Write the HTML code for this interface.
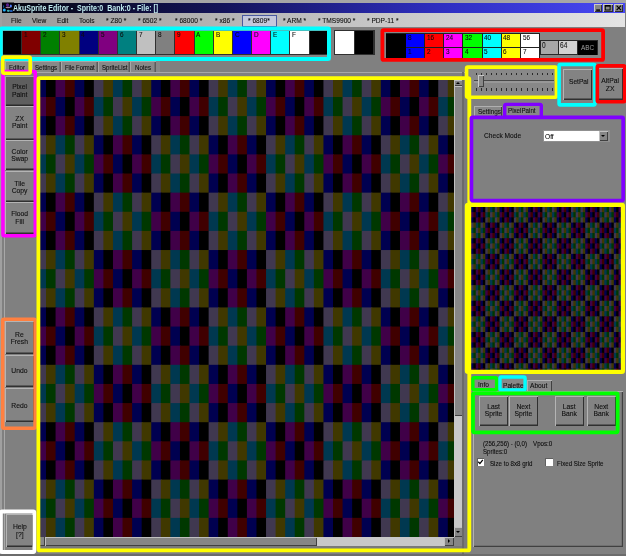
<!DOCTYPE html>
<html><head><meta charset="utf-8"><style>
html,body{margin:0;padding:0;width:626px;height:556px;overflow:hidden;background:#808080}
body>div,body>span,body>svg{position:absolute}
div{box-sizing:border-box}
.t{position:absolute;white-space:nowrap;font-family:"Liberation Sans", sans-serif;line-height:1;transform-origin:0 0;filter:grayscale(1);-webkit-text-stroke:0.1px #000}
.tt{filter:none;-webkit-text-stroke:0}
.ct{position:absolute;text-align:center;font-family:"Liberation Sans", sans-serif;font-size:7.6px;line-height:7.6px;color:#101010;transform:scaleX(0.89);transform-origin:50% 0;filter:grayscale(1);-webkit-text-stroke:0.1px #000}
.ol{position:absolute;box-sizing:content-box}
.arr{position:absolute;width:0;height:0;border-style:solid}
</style></head><body>
<div style="left:0px;top:0px;width:626.00px;height:556.00px;background:#808080"></div><div style="left:0px;top:0px;width:626.00px;height:2.50px;background:#a6a6a6"></div><div style="left:0px;top:0px;width:2.00px;height:556.00px;background:#a0a0a0"></div><div style="left:2px;top:2.5px;width:623.00px;height:10.80px;background:linear-gradient(90deg,#04040c 0%,#141458 35%,#2e2ec0 70%,#4848f4 100%)"></div><svg style="position:absolute;left:0;top:0" width="16" height="16"><defs><filter id="bl" x="-50%" y="-50%" width="200%" height="200%"><feGaussianBlur stdDeviation="0.6"/></filter></defs><rect x="2" y="2.5" width="12" height="10.8" fill="#04040c"/><g filter="url(#bl)"><ellipse cx="7.5" cy="5" rx="1.6" ry="1.8" fill="#5a2090"/><ellipse cx="10.8" cy="6" rx="1.1" ry="1.6" fill="#5080ff"/><ellipse cx="8" cy="7.5" rx="2.6" ry="0.8" fill="#a08098"/><ellipse cx="4.3" cy="10" rx="1.5" ry="1.6" fill="#20b0ff"/><ellipse cx="8.3" cy="10.8" rx="1.5" ry="1.1" fill="#40b0b0"/><ellipse cx="11.2" cy="11" rx="1.6" ry="1.1" fill="#2060c0"/><ellipse cx="3.6" cy="6.5" rx="0.6" ry="1.2" fill="#1050a0"/></g></svg><span class="t tt" style="left:13.4px;top:3.90px;font-size:8.6px;color:#c0ecf0;font-weight:bold;transform:scaleX(0.822);">AkuSprite Editor -&nbsp; Sprite:0&nbsp; Bank:0 - File: []</span><div style="left:593.7px;top:4.2px;width:8.60px;height:7.60px;background:#868686;box-shadow:inset 1px 1px 0 #c8c8c8, inset -1px -1px 0 #303030"></div><div style="left:603px;top:4.2px;width:9.50px;height:7.60px;background:#868686;box-shadow:inset 1px 1px 0 #c8c8c8, inset -1px -1px 0 #303030"></div><div style="left:614px;top:4.2px;width:9.40px;height:7.60px;background:#868686;box-shadow:inset 1px 1px 0 #c8c8c8, inset -1px -1px 0 #303030"></div><svg style="position:absolute;left:586px;top:0" width="40" height="16"><rect x="10.2" y="9.4" width="3.8" height="1.4" fill="#000"/><rect x="19.3" y="5.6" width="4.8" height="4.4" fill="none" stroke="#000" stroke-width="0.9"/><rect x="18.9" y="5.2" width="5.6" height="1.4" fill="#000"/><path d="M30.6 5.6 L35 10.2 M35 5.6 L30.6 10.2" stroke="#000" stroke-width="1.1"/></svg><div style="left:2px;top:13.3px;width:623.00px;height:13.70px;background:linear-gradient(90deg,#9a9a9a 0%,#e4e4e4 100%)"></div><div style="left:242px;top:15.2px;width:35.00px;height:11.80px;background:#c4c8dc;border:1px solid #4a5aa0;box-sizing:border-box"></div><span class="t" style="left:10.9px;top:17.26px;font-size:7.6px;color:#101010;transform:scaleX(0.872);">File</span><span class="t" style="left:32px;top:17.26px;font-size:7.6px;color:#101010;transform:scaleX(0.872);">View</span><span class="t" style="left:56.7px;top:17.26px;font-size:7.6px;color:#101010;transform:scaleX(0.872);">Edit</span><span class="t" style="left:79px;top:17.26px;font-size:7.6px;color:#101010;transform:scaleX(0.872);">Tools</span><span class="t" style="left:105.8px;top:17.26px;font-size:7.6px;color:#101010;transform:scaleX(0.872);">* Z80 *</span><span class="t" style="left:138px;top:17.26px;font-size:7.6px;color:#101010;transform:scaleX(0.872);">* 6502 *</span><span class="t" style="left:174.6px;top:17.26px;font-size:7.6px;color:#101010;transform:scaleX(0.872);">* 68000 *</span><span class="t" style="left:215px;top:17.26px;font-size:7.6px;color:#101010;transform:scaleX(0.872);">* x86 *</span><span class="t" style="left:248px;top:17.26px;font-size:7.6px;color:#101010;transform:scaleX(0.872);">* 6809*</span><span class="t" style="left:282.5px;top:17.26px;font-size:7.6px;color:#101010;transform:scaleX(0.872);">* ARM *</span><span class="t" style="left:318px;top:17.26px;font-size:7.6px;color:#101010;transform:scaleX(0.872);">* TMS9900 *</span><span class="t" style="left:366.8px;top:17.26px;font-size:7.6px;color:#101010;transform:scaleX(0.872);">* PDP-11 *</span><div style="left:0px;top:26.5px;width:331.00px;height:34.50px;background:#868686"></div><div style="left:2.5px;top:30.5px;width:324.50px;height:24.50px;background:#303030"></div><div style="left:2.9px;top:31px;width:18.20px;height:23.30px;background:#000000"></div><div style="left:22.07px;top:31px;width:18.20px;height:23.30px;background:#800000"></div><span class="t" style="left:23.87px;top:31.20px;font-size:8px;color:#101010;transform:scaleX(0.800);">1</span><div style="left:41.24px;top:31px;width:18.20px;height:23.30px;background:#008000"></div><span class="t" style="left:43.04px;top:31.20px;font-size:8px;color:#101010;transform:scaleX(0.800);">2</span><div style="left:60.410000000000004px;top:31px;width:18.20px;height:23.30px;background:#808000"></div><span class="t" style="left:62.21px;top:31.20px;font-size:8px;color:#101010;transform:scaleX(0.800);">3</span><div style="left:79.58000000000001px;top:31px;width:18.20px;height:23.30px;background:#000080"></div><span class="t" style="left:81.38000000000001px;top:31.20px;font-size:8px;color:#101010;transform:scaleX(0.800);">4</span><div style="left:98.75000000000001px;top:31px;width:18.20px;height:23.30px;background:#800080"></div><span class="t" style="left:100.55000000000001px;top:31.20px;font-size:8px;color:#101010;transform:scaleX(0.800);">5</span><div style="left:117.92000000000002px;top:31px;width:18.20px;height:23.30px;background:#008080"></div><span class="t" style="left:119.72000000000001px;top:31.20px;font-size:8px;color:#101010;transform:scaleX(0.800);">6</span><div style="left:137.09px;top:31px;width:18.20px;height:23.30px;background:#c0c0c0"></div><span class="t" style="left:138.89000000000001px;top:31.20px;font-size:8px;color:#101010;transform:scaleX(0.800);">7</span><div style="left:156.26000000000002px;top:31px;width:18.20px;height:23.30px;background:#808080"></div><span class="t" style="left:158.06000000000003px;top:31.20px;font-size:8px;color:#101010;transform:scaleX(0.800);">8</span><div style="left:175.43000000000004px;top:31px;width:18.20px;height:23.30px;background:#ff0000"></div><span class="t" style="left:177.23000000000005px;top:31.20px;font-size:8px;color:#101010;transform:scaleX(0.800);">9</span><div style="left:194.60000000000002px;top:31px;width:18.20px;height:23.30px;background:#00ff00"></div><span class="t" style="left:196.40000000000003px;top:31.20px;font-size:8px;color:#101010;transform:scaleX(0.800);">A</span><div style="left:213.77px;top:31px;width:18.20px;height:23.30px;background:#ffff00"></div><span class="t" style="left:215.57000000000002px;top:31.20px;font-size:8px;color:#101010;transform:scaleX(0.800);">B</span><div style="left:232.94000000000003px;top:31px;width:18.20px;height:23.30px;background:#0000ff"></div><span class="t" style="left:234.74000000000004px;top:31.20px;font-size:8px;color:#101010;transform:scaleX(0.800);">C</span><div style="left:252.11000000000004px;top:31px;width:18.20px;height:23.30px;background:#ff00ff"></div><span class="t" style="left:253.91000000000005px;top:31.20px;font-size:8px;color:#101010;transform:scaleX(0.800);">D</span><div style="left:271.28px;top:31px;width:18.20px;height:23.30px;background:#00ffff"></div><span class="t" style="left:273.08px;top:31.20px;font-size:8px;color:#101010;transform:scaleX(0.800);">E</span><div style="left:290.45px;top:31px;width:18.20px;height:23.30px;background:#ffffff"></div><span class="t" style="left:292.25px;top:31.20px;font-size:8px;color:#101010;transform:scaleX(0.800);">F</span><div style="left:309.62px;top:31px;width:18.20px;height:23.30px;background:#000000"></div><div style="left:334px;top:30px;width:40.50px;height:25.40px;background:#303030"></div><div style="left:335.2px;top:31.2px;width:18.80px;height:23.20px;background:#ffffff"></div><div style="left:354.5px;top:31px;width:18.90px;height:23.40px;background:#000000"></div><div style="left:383px;top:31px;width:220.00px;height:28.50px;background:#868686"></div><div style="left:385.5px;top:32.5px;width:154.50px;height:27.00px;background:#202020"></div><div style="left:386.1px;top:33.5px;width:19.50px;height:25.30px;background:#000"></div><div style="left:405.9px;top:33.6px;width:18.30px;height:13.50px;background:#0000ff"></div><div style="left:405.9px;top:48px;width:18.30px;height:10.80px;background:#0000ff"></div><span class="t" style="left:407.7px;top:33.80px;font-size:8px;color:#101010;transform:scaleX(0.800);">8</span><span class="t" style="left:407.7px;top:47.60px;font-size:8px;color:#101010;transform:scaleX(0.800);">1</span><div style="left:425.04999999999995px;top:33.6px;width:18.30px;height:13.50px;background:#ff0000"></div><div style="left:425.04999999999995px;top:48px;width:18.30px;height:10.80px;background:#ff0000"></div><span class="t" style="left:426.84999999999997px;top:33.80px;font-size:8px;color:#101010;transform:scaleX(0.800);">16</span><span class="t" style="left:426.84999999999997px;top:47.60px;font-size:8px;color:#101010;transform:scaleX(0.800);">2</span><div style="left:444.2px;top:33.6px;width:18.30px;height:13.50px;background:#ff00ff"></div><div style="left:444.2px;top:48px;width:18.30px;height:10.80px;background:#ff00ff"></div><span class="t" style="left:446.0px;top:33.80px;font-size:8px;color:#101010;transform:scaleX(0.800);">24</span><span class="t" style="left:446.0px;top:47.60px;font-size:8px;color:#101010;transform:scaleX(0.800);">3</span><div style="left:463.34999999999997px;top:33.6px;width:18.30px;height:13.50px;background:#00ff00"></div><div style="left:463.34999999999997px;top:48px;width:18.30px;height:10.80px;background:#00ff00"></div><span class="t" style="left:465.15px;top:33.80px;font-size:8px;color:#101010;transform:scaleX(0.800);">32</span><span class="t" style="left:465.15px;top:47.60px;font-size:8px;color:#101010;transform:scaleX(0.800);">4</span><div style="left:482.5px;top:33.6px;width:18.30px;height:13.50px;background:#00ffff"></div><div style="left:482.5px;top:48px;width:18.30px;height:10.80px;background:#00ffff"></div><span class="t" style="left:484.3px;top:33.80px;font-size:8px;color:#101010;transform:scaleX(0.800);">40</span><span class="t" style="left:484.3px;top:47.60px;font-size:8px;color:#101010;transform:scaleX(0.800);">5</span><div style="left:501.65px;top:33.6px;width:18.30px;height:13.50px;background:#ffff00"></div><div style="left:501.65px;top:48px;width:18.30px;height:10.80px;background:#ffff00"></div><span class="t" style="left:503.45px;top:33.80px;font-size:8px;color:#101010;transform:scaleX(0.800);">48</span><span class="t" style="left:503.45px;top:47.60px;font-size:8px;color:#101010;transform:scaleX(0.800);">6</span><div style="left:520.8px;top:33.6px;width:18.30px;height:13.50px;background:#ffffff"></div><div style="left:520.8px;top:48px;width:18.30px;height:10.80px;background:#ffffff"></div><span class="t" style="left:522.5999999999999px;top:33.80px;font-size:8px;color:#101010;transform:scaleX(0.800);">56</span><span class="t" style="left:522.5999999999999px;top:47.60px;font-size:8px;color:#101010;transform:scaleX(0.800);">7</span><div style="left:539.6px;top:40.0px;width:58.00px;height:15.00px;background:#282828"></div><div style="left:540.6px;top:41.0px;width:17.40px;height:13.00px;background:#a8a8a8"></div><span class="t" style="left:541.5px;top:42.00px;font-size:8.2px;color:#202020;transform:scaleX(0.800);">0</span><div style="left:559.0px;top:41.0px;width:18.00px;height:13.00px;background:#d2d2d2"></div><span class="t" style="left:560.3px;top:42.00px;font-size:8.2px;color:#202020;transform:scaleX(0.800);">64</span><div style="left:578.0px;top:41.0px;width:19.00px;height:13.60px;background:#000"></div><span class="t" style="left:580.5px;top:44.20px;font-size:8px;color:#b0b0b0;transform:scaleX(0.800);">ABC</span><div style="left:2px;top:61.3px;width:158.00px;height:10.90px;background:#888888"></div><div style="left:4.5px;top:61.3px;width:26.00px;height:10.90px;background:#888888;box-shadow:inset 1px 1px 0 #a8a8a8, inset -1.5px 0 0 #5a5a5a"></div><div style="left:32px;top:61.3px;width:28.80px;height:10.90px;background:#888888;box-shadow:inset 1px 1px 0 #a8a8a8, inset -1.5px 0 0 #5a5a5a"></div><div style="left:60.8px;top:61.3px;width:37.00px;height:10.90px;background:#888888;box-shadow:inset 1px 1px 0 #a8a8a8, inset -1.5px 0 0 #5a5a5a"></div><div style="left:97.8px;top:61.3px;width:32.60px;height:10.90px;background:#888888;box-shadow:inset 1px 1px 0 #a8a8a8, inset -1.5px 0 0 #5a5a5a"></div><div style="left:130.4px;top:61.3px;width:25.80px;height:10.90px;background:#888888;box-shadow:inset 1px 1px 0 #a8a8a8, inset -1.5px 0 0 #5a5a5a"></div><span class="t" style="left:9px;top:64.16px;font-size:7.6px;color:#101010;transform:scaleX(0.805);">Editor</span><span class="t" style="left:34.5px;top:64.16px;font-size:7.6px;color:#101010;transform:scaleX(0.805);">Settings</span><span class="t" style="left:64.6px;top:64.16px;font-size:7.6px;color:#101010;transform:scaleX(0.772);">File Format</span><span class="t" style="left:102px;top:64.16px;font-size:7.6px;color:#101010;transform:scaleX(0.805);">SpriteList</span><span class="t" style="left:134.6px;top:64.16px;font-size:7.6px;color:#101010;transform:scaleX(0.805);">Notes</span><div style="left:2px;top:72.1px;width:462.50px;height:1.10px;background:#a8a8a8"></div><div style="left:4px;top:72px;width:1.00px;height:484.00px;background:#a8a8a8"></div><div style="left:5.4px;top:76px;width:29.20px;height:30.00px;background:#5e5e5e;box-shadow:inset 1px 1px 0 #a0a0a0, inset -1px -1.5px 0 #2a2a2a;"></div><div style="left:5.4px;top:106.4px;width:29.20px;height:33.60px;background:#838383;box-shadow:inset 1px 1px 0 #b4b4b4, inset -1px -1.5px 0 #303030;"></div><div style="left:5.4px;top:140.3px;width:29.20px;height:30.20px;background:#838383;box-shadow:inset 1px 1px 0 #b4b4b4, inset -1px -1.5px 0 #303030;"></div><div style="left:5.4px;top:171px;width:29.20px;height:31.00px;background:#838383;box-shadow:inset 1px 1px 0 #b4b4b4, inset -1px -1.5px 0 #303030;"></div><div style="left:5.4px;top:202.2px;width:29.20px;height:31.40px;background:#838383;box-shadow:inset 1px 1px 0 #b4b4b4, inset -1px -1.5px 0 #303030;"></div><div class="ct" style="left:5.4px;top:83.4px;width:29.2px">Pixel<br>Paint</div><div class="ct" style="left:5.4px;top:114.8px;width:29.2px">ZX<br>Paint</div><div class="ct" style="left:5.4px;top:147.8px;width:29.2px">Color<br>Swap</div><div class="ct" style="left:5.4px;top:179.5px;width:29.2px">Tile<br>Copy</div><div class="ct" style="left:5.4px;top:210.3px;width:29.2px">Flood<br>Fill</div><div style="left:5px;top:321px;width:28.70px;height:33.30px;background:#838383;box-shadow:inset 1px 1px 0 #b4b4b4, inset -1px -1.5px 0 #303030;"></div><div style="left:5px;top:355px;width:28.70px;height:32.00px;background:#838383;box-shadow:inset 1px 1px 0 #b4b4b4, inset -1px -1.5px 0 #303030;"></div><div style="left:5px;top:387.5px;width:28.70px;height:34.00px;background:#838383;box-shadow:inset 1px 1px 0 #b4b4b4, inset -1px -1.5px 0 #303030;"></div><div class="ct" style="left:5px;top:330.6px;width:28.7px">Re<br>Fresh</div><div class="ct" style="left:5px;top:367.4px;width:28.7px">Undo</div><div class="ct" style="left:5px;top:402.2px;width:28.7px">Redo</div><div style="left:5.5px;top:514px;width:27.70px;height:32.80px;background:#838383;box-shadow:inset 1px 1px 0 #b4b4b4, inset -1px -1.5px 0 #303030;"></div><div class="ct" style="left:5.5px;top:523px;width:27.7px">Help<br>[?]</div><div style="left:0px;top:553.5px;width:626.00px;height:2.50px;background:#6c6c6c"></div><div style="left:40.1px;top:80px;width:413.90px;height:456.60px;overflow:hidden;background:#200020"><svg width="414" height="457" style="position:absolute;left:0;top:0"><defs><g id="cr0"><rect x="-3.57" width="10.57" height="20.13" fill="#000050"/><rect x="6.00" width="10.57" height="20.13" fill="#000000"/><rect x="15.57" width="10.57" height="20.13" fill="#400048"/><rect x="25.13" width="10.57" height="20.13" fill="#400000"/><rect x="34.70" width="10.57" height="20.13" fill="#000050"/><rect x="44.27" width="10.57" height="20.13" fill="#000000"/><rect x="53.84" width="10.57" height="20.13" fill="#403850"/><rect x="63.40" width="10.57" height="20.13" fill="#403800"/><rect x="72.97" width="10.57" height="20.13" fill="#003850"/><rect x="82.54" width="10.57" height="20.13" fill="#003800"/><rect x="92.10" width="10.57" height="20.13" fill="#403850"/><rect x="101.67" width="10.57" height="20.13" fill="#403800"/><rect x="111.24" width="10.57" height="20.13" fill="#000050"/><rect x="120.80" width="10.57" height="20.13" fill="#000000"/><rect x="130.37" width="10.57" height="20.13" fill="#400048"/><rect x="139.94" width="10.57" height="20.13" fill="#400000"/><rect x="149.50" width="10.57" height="20.13" fill="#000050"/><rect x="159.07" width="10.57" height="20.13" fill="#000000"/><rect x="168.64" width="10.57" height="20.13" fill="#403850"/><rect x="178.21" width="10.57" height="20.13" fill="#403800"/><rect x="187.77" width="10.57" height="20.13" fill="#003850"/><rect x="197.34" width="10.57" height="20.13" fill="#003800"/><rect x="206.91" width="10.57" height="20.13" fill="#403850"/><rect x="216.47" width="10.57" height="20.13" fill="#403800"/><rect x="226.04" width="10.57" height="20.13" fill="#000050"/><rect x="235.61" width="10.57" height="20.13" fill="#000000"/><rect x="245.18" width="10.57" height="20.13" fill="#400048"/><rect x="254.74" width="10.57" height="20.13" fill="#400000"/><rect x="264.31" width="10.57" height="20.13" fill="#000050"/><rect x="273.88" width="10.57" height="20.13" fill="#000000"/><rect x="283.44" width="10.57" height="20.13" fill="#403850"/><rect x="293.01" width="10.57" height="20.13" fill="#403800"/><rect x="302.58" width="10.57" height="20.13" fill="#003850"/><rect x="312.14" width="10.57" height="20.13" fill="#003800"/><rect x="321.71" width="10.57" height="20.13" fill="#403850"/><rect x="331.28" width="10.57" height="20.13" fill="#403800"/><rect x="340.85" width="10.57" height="20.13" fill="#000050"/><rect x="350.41" width="10.57" height="20.13" fill="#000000"/><rect x="359.98" width="10.57" height="20.13" fill="#400048"/><rect x="369.55" width="10.57" height="20.13" fill="#400000"/><rect x="379.11" width="10.57" height="20.13" fill="#000050"/><rect x="388.68" width="10.57" height="20.13" fill="#000000"/><rect x="398.25" width="10.57" height="20.13" fill="#403850"/><rect x="407.81" width="10.57" height="20.13" fill="#403800"/></g><g id="cr1"><rect x="-3.57" width="10.57" height="20.13" fill="#400048"/><rect x="6.00" width="10.57" height="20.13" fill="#400000"/><rect x="15.57" width="10.57" height="20.13" fill="#000050"/><rect x="25.13" width="10.57" height="20.13" fill="#000000"/><rect x="34.70" width="10.57" height="20.13" fill="#400048"/><rect x="44.27" width="10.57" height="20.13" fill="#400000"/><rect x="53.84" width="10.57" height="20.13" fill="#003850"/><rect x="63.40" width="10.57" height="20.13" fill="#003800"/><rect x="72.97" width="10.57" height="20.13" fill="#403850"/><rect x="82.54" width="10.57" height="20.13" fill="#403800"/><rect x="92.10" width="10.57" height="20.13" fill="#003850"/><rect x="101.67" width="10.57" height="20.13" fill="#003800"/><rect x="111.24" width="10.57" height="20.13" fill="#400048"/><rect x="120.80" width="10.57" height="20.13" fill="#400000"/><rect x="130.37" width="10.57" height="20.13" fill="#000050"/><rect x="139.94" width="10.57" height="20.13" fill="#000000"/><rect x="149.50" width="10.57" height="20.13" fill="#400048"/><rect x="159.07" width="10.57" height="20.13" fill="#400000"/><rect x="168.64" width="10.57" height="20.13" fill="#003850"/><rect x="178.21" width="10.57" height="20.13" fill="#003800"/><rect x="187.77" width="10.57" height="20.13" fill="#403850"/><rect x="197.34" width="10.57" height="20.13" fill="#403800"/><rect x="206.91" width="10.57" height="20.13" fill="#003850"/><rect x="216.47" width="10.57" height="20.13" fill="#003800"/><rect x="226.04" width="10.57" height="20.13" fill="#400048"/><rect x="235.61" width="10.57" height="20.13" fill="#400000"/><rect x="245.18" width="10.57" height="20.13" fill="#000050"/><rect x="254.74" width="10.57" height="20.13" fill="#000000"/><rect x="264.31" width="10.57" height="20.13" fill="#400048"/><rect x="273.88" width="10.57" height="20.13" fill="#400000"/><rect x="283.44" width="10.57" height="20.13" fill="#003850"/><rect x="293.01" width="10.57" height="20.13" fill="#003800"/><rect x="302.58" width="10.57" height="20.13" fill="#403850"/><rect x="312.14" width="10.57" height="20.13" fill="#403800"/><rect x="321.71" width="10.57" height="20.13" fill="#003850"/><rect x="331.28" width="10.57" height="20.13" fill="#003800"/><rect x="340.85" width="10.57" height="20.13" fill="#400048"/><rect x="350.41" width="10.57" height="20.13" fill="#400000"/><rect x="359.98" width="10.57" height="20.13" fill="#000050"/><rect x="369.55" width="10.57" height="20.13" fill="#000000"/><rect x="379.11" width="10.57" height="20.13" fill="#400048"/><rect x="388.68" width="10.57" height="20.13" fill="#400000"/><rect x="398.25" width="10.57" height="20.13" fill="#003850"/><rect x="407.81" width="10.57" height="20.13" fill="#003800"/></g><g id="cr2"><rect x="-3.57" width="10.57" height="20.13" fill="#000050"/><rect x="6.00" width="10.57" height="20.13" fill="#000000"/><rect x="15.57" width="10.57" height="20.13" fill="#400048"/><rect x="25.13" width="10.57" height="20.13" fill="#400000"/><rect x="34.70" width="10.57" height="20.13" fill="#000050"/><rect x="44.27" width="10.57" height="20.13" fill="#000000"/><rect x="53.84" width="10.57" height="20.13" fill="#403850"/><rect x="63.40" width="10.57" height="20.13" fill="#403800"/><rect x="72.97" width="10.57" height="20.13" fill="#003850"/><rect x="82.54" width="10.57" height="20.13" fill="#003800"/><rect x="92.10" width="10.57" height="20.13" fill="#403850"/><rect x="101.67" width="10.57" height="20.13" fill="#403800"/><rect x="111.24" width="10.57" height="20.13" fill="#000050"/><rect x="120.80" width="10.57" height="20.13" fill="#000000"/><rect x="130.37" width="10.57" height="20.13" fill="#400048"/><rect x="139.94" width="10.57" height="20.13" fill="#400000"/><rect x="149.50" width="10.57" height="20.13" fill="#000050"/><rect x="159.07" width="10.57" height="20.13" fill="#000000"/><rect x="168.64" width="10.57" height="20.13" fill="#403850"/><rect x="178.21" width="10.57" height="20.13" fill="#403800"/><rect x="187.77" width="10.57" height="20.13" fill="#003850"/><rect x="197.34" width="10.57" height="20.13" fill="#003800"/><rect x="206.91" width="10.57" height="20.13" fill="#403850"/><rect x="216.47" width="10.57" height="20.13" fill="#403800"/><rect x="226.04" width="10.57" height="20.13" fill="#000050"/><rect x="235.61" width="10.57" height="20.13" fill="#000000"/><rect x="245.18" width="10.57" height="20.13" fill="#400048"/><rect x="254.74" width="10.57" height="20.13" fill="#400000"/><rect x="264.31" width="10.57" height="20.13" fill="#000050"/><rect x="273.88" width="10.57" height="20.13" fill="#000000"/><rect x="283.44" width="10.57" height="20.13" fill="#403850"/><rect x="293.01" width="10.57" height="20.13" fill="#403800"/><rect x="302.58" width="10.57" height="20.13" fill="#003850"/><rect x="312.14" width="10.57" height="20.13" fill="#003800"/><rect x="321.71" width="10.57" height="20.13" fill="#403850"/><rect x="331.28" width="10.57" height="20.13" fill="#403800"/><rect x="340.85" width="10.57" height="20.13" fill="#000050"/><rect x="350.41" width="10.57" height="20.13" fill="#000000"/><rect x="359.98" width="10.57" height="20.13" fill="#400048"/><rect x="369.55" width="10.57" height="20.13" fill="#400000"/><rect x="379.11" width="10.57" height="20.13" fill="#000050"/><rect x="388.68" width="10.57" height="20.13" fill="#000000"/><rect x="398.25" width="10.57" height="20.13" fill="#403850"/><rect x="407.81" width="10.57" height="20.13" fill="#403800"/></g><g id="cr3"><rect x="-3.57" width="10.57" height="20.13" fill="#403850"/><rect x="6.00" width="10.57" height="20.13" fill="#403800"/><rect x="15.57" width="10.57" height="20.13" fill="#003850"/><rect x="25.13" width="10.57" height="20.13" fill="#003800"/><rect x="34.70" width="10.57" height="20.13" fill="#403850"/><rect x="44.27" width="10.57" height="20.13" fill="#403800"/><rect x="53.84" width="10.57" height="20.13" fill="#000050"/><rect x="63.40" width="10.57" height="20.13" fill="#000000"/><rect x="72.97" width="10.57" height="20.13" fill="#400048"/><rect x="82.54" width="10.57" height="20.13" fill="#400000"/><rect x="92.10" width="10.57" height="20.13" fill="#000050"/><rect x="101.67" width="10.57" height="20.13" fill="#000000"/><rect x="111.24" width="10.57" height="20.13" fill="#403850"/><rect x="120.80" width="10.57" height="20.13" fill="#403800"/><rect x="130.37" width="10.57" height="20.13" fill="#003850"/><rect x="139.94" width="10.57" height="20.13" fill="#003800"/><rect x="149.50" width="10.57" height="20.13" fill="#403850"/><rect x="159.07" width="10.57" height="20.13" fill="#403800"/><rect x="168.64" width="10.57" height="20.13" fill="#000050"/><rect x="178.21" width="10.57" height="20.13" fill="#000000"/><rect x="187.77" width="10.57" height="20.13" fill="#400048"/><rect x="197.34" width="10.57" height="20.13" fill="#400000"/><rect x="206.91" width="10.57" height="20.13" fill="#000050"/><rect x="216.47" width="10.57" height="20.13" fill="#000000"/><rect x="226.04" width="10.57" height="20.13" fill="#403850"/><rect x="235.61" width="10.57" height="20.13" fill="#403800"/><rect x="245.18" width="10.57" height="20.13" fill="#003850"/><rect x="254.74" width="10.57" height="20.13" fill="#003800"/><rect x="264.31" width="10.57" height="20.13" fill="#403850"/><rect x="273.88" width="10.57" height="20.13" fill="#403800"/><rect x="283.44" width="10.57" height="20.13" fill="#000050"/><rect x="293.01" width="10.57" height="20.13" fill="#000000"/><rect x="302.58" width="10.57" height="20.13" fill="#400048"/><rect x="312.14" width="10.57" height="20.13" fill="#400000"/><rect x="321.71" width="10.57" height="20.13" fill="#000050"/><rect x="331.28" width="10.57" height="20.13" fill="#000000"/><rect x="340.85" width="10.57" height="20.13" fill="#403850"/><rect x="350.41" width="10.57" height="20.13" fill="#403800"/><rect x="359.98" width="10.57" height="20.13" fill="#003850"/><rect x="369.55" width="10.57" height="20.13" fill="#003800"/><rect x="379.11" width="10.57" height="20.13" fill="#403850"/><rect x="388.68" width="10.57" height="20.13" fill="#403800"/><rect x="398.25" width="10.57" height="20.13" fill="#000050"/><rect x="407.81" width="10.57" height="20.13" fill="#000000"/></g><g id="cr4"><rect x="-3.57" width="10.57" height="20.13" fill="#003850"/><rect x="6.00" width="10.57" height="20.13" fill="#003800"/><rect x="15.57" width="10.57" height="20.13" fill="#403850"/><rect x="25.13" width="10.57" height="20.13" fill="#403800"/><rect x="34.70" width="10.57" height="20.13" fill="#003850"/><rect x="44.27" width="10.57" height="20.13" fill="#003800"/><rect x="53.84" width="10.57" height="20.13" fill="#400048"/><rect x="63.40" width="10.57" height="20.13" fill="#400000"/><rect x="72.97" width="10.57" height="20.13" fill="#000050"/><rect x="82.54" width="10.57" height="20.13" fill="#000000"/><rect x="92.10" width="10.57" height="20.13" fill="#400048"/><rect x="101.67" width="10.57" height="20.13" fill="#400000"/><rect x="111.24" width="10.57" height="20.13" fill="#003850"/><rect x="120.80" width="10.57" height="20.13" fill="#003800"/><rect x="130.37" width="10.57" height="20.13" fill="#403850"/><rect x="139.94" width="10.57" height="20.13" fill="#403800"/><rect x="149.50" width="10.57" height="20.13" fill="#003850"/><rect x="159.07" width="10.57" height="20.13" fill="#003800"/><rect x="168.64" width="10.57" height="20.13" fill="#400048"/><rect x="178.21" width="10.57" height="20.13" fill="#400000"/><rect x="187.77" width="10.57" height="20.13" fill="#000050"/><rect x="197.34" width="10.57" height="20.13" fill="#000000"/><rect x="206.91" width="10.57" height="20.13" fill="#400048"/><rect x="216.47" width="10.57" height="20.13" fill="#400000"/><rect x="226.04" width="10.57" height="20.13" fill="#003850"/><rect x="235.61" width="10.57" height="20.13" fill="#003800"/><rect x="245.18" width="10.57" height="20.13" fill="#403850"/><rect x="254.74" width="10.57" height="20.13" fill="#403800"/><rect x="264.31" width="10.57" height="20.13" fill="#003850"/><rect x="273.88" width="10.57" height="20.13" fill="#003800"/><rect x="283.44" width="10.57" height="20.13" fill="#400048"/><rect x="293.01" width="10.57" height="20.13" fill="#400000"/><rect x="302.58" width="10.57" height="20.13" fill="#000050"/><rect x="312.14" width="10.57" height="20.13" fill="#000000"/><rect x="321.71" width="10.57" height="20.13" fill="#400048"/><rect x="331.28" width="10.57" height="20.13" fill="#400000"/><rect x="340.85" width="10.57" height="20.13" fill="#003850"/><rect x="350.41" width="10.57" height="20.13" fill="#003800"/><rect x="359.98" width="10.57" height="20.13" fill="#403850"/><rect x="369.55" width="10.57" height="20.13" fill="#403800"/><rect x="379.11" width="10.57" height="20.13" fill="#003850"/><rect x="388.68" width="10.57" height="20.13" fill="#003800"/><rect x="398.25" width="10.57" height="20.13" fill="#400048"/><rect x="407.81" width="10.57" height="20.13" fill="#400000"/></g><g id="cr5"><rect x="-3.57" width="10.57" height="20.13" fill="#403850"/><rect x="6.00" width="10.57" height="20.13" fill="#403800"/><rect x="15.57" width="10.57" height="20.13" fill="#003850"/><rect x="25.13" width="10.57" height="20.13" fill="#003800"/><rect x="34.70" width="10.57" height="20.13" fill="#403850"/><rect x="44.27" width="10.57" height="20.13" fill="#403800"/><rect x="53.84" width="10.57" height="20.13" fill="#000050"/><rect x="63.40" width="10.57" height="20.13" fill="#000000"/><rect x="72.97" width="10.57" height="20.13" fill="#400048"/><rect x="82.54" width="10.57" height="20.13" fill="#400000"/><rect x="92.10" width="10.57" height="20.13" fill="#000050"/><rect x="101.67" width="10.57" height="20.13" fill="#000000"/><rect x="111.24" width="10.57" height="20.13" fill="#403850"/><rect x="120.80" width="10.57" height="20.13" fill="#403800"/><rect x="130.37" width="10.57" height="20.13" fill="#003850"/><rect x="139.94" width="10.57" height="20.13" fill="#003800"/><rect x="149.50" width="10.57" height="20.13" fill="#403850"/><rect x="159.07" width="10.57" height="20.13" fill="#403800"/><rect x="168.64" width="10.57" height="20.13" fill="#000050"/><rect x="178.21" width="10.57" height="20.13" fill="#000000"/><rect x="187.77" width="10.57" height="20.13" fill="#400048"/><rect x="197.34" width="10.57" height="20.13" fill="#400000"/><rect x="206.91" width="10.57" height="20.13" fill="#000050"/><rect x="216.47" width="10.57" height="20.13" fill="#000000"/><rect x="226.04" width="10.57" height="20.13" fill="#403850"/><rect x="235.61" width="10.57" height="20.13" fill="#403800"/><rect x="245.18" width="10.57" height="20.13" fill="#003850"/><rect x="254.74" width="10.57" height="20.13" fill="#003800"/><rect x="264.31" width="10.57" height="20.13" fill="#403850"/><rect x="273.88" width="10.57" height="20.13" fill="#403800"/><rect x="283.44" width="10.57" height="20.13" fill="#000050"/><rect x="293.01" width="10.57" height="20.13" fill="#000000"/><rect x="302.58" width="10.57" height="20.13" fill="#400048"/><rect x="312.14" width="10.57" height="20.13" fill="#400000"/><rect x="321.71" width="10.57" height="20.13" fill="#000050"/><rect x="331.28" width="10.57" height="20.13" fill="#000000"/><rect x="340.85" width="10.57" height="20.13" fill="#403850"/><rect x="350.41" width="10.57" height="20.13" fill="#403800"/><rect x="359.98" width="10.57" height="20.13" fill="#003850"/><rect x="369.55" width="10.57" height="20.13" fill="#003800"/><rect x="379.11" width="10.57" height="20.13" fill="#403850"/><rect x="388.68" width="10.57" height="20.13" fill="#403800"/><rect x="398.25" width="10.57" height="20.13" fill="#000050"/><rect x="407.81" width="10.57" height="20.13" fill="#000000"/></g></defs><use href="#cr0" y="-2.13"/><use href="#cr1" y="17.00"/><use href="#cr2" y="36.13"/><use href="#cr3" y="55.26"/><use href="#cr4" y="74.39"/><use href="#cr5" y="93.52"/><use href="#cr0" y="112.65"/><use href="#cr1" y="131.78"/><use href="#cr2" y="150.91"/><use href="#cr3" y="170.04"/><use href="#cr4" y="189.17"/><use href="#cr5" y="208.30"/><use href="#cr0" y="227.43"/><use href="#cr1" y="246.56"/><use href="#cr2" y="265.69"/><use href="#cr3" y="284.82"/><use href="#cr4" y="303.95"/><use href="#cr5" y="323.08"/><use href="#cr0" y="342.21"/><use href="#cr1" y="361.34"/><use href="#cr2" y="380.47"/><use href="#cr3" y="399.60"/><use href="#cr4" y="418.73"/><use href="#cr5" y="437.86"/></svg></div><div style="left:454px;top:80px;width:9.60px;height:456.60px;background:#c8c8c8"></div><div style="left:454px;top:80px;width:9.60px;height:6.00px;background:#868686;box-shadow:inset 1px 1px 0 #c0c0c0, inset -1px -1px 0 #404040"></div><div style="left:454px;top:86px;width:9.60px;height:330.00px;background:#868686;box-shadow:inset 1px 1px 0 #c0c0c0, inset -1px -1px 0 #404040"></div><div style="left:454px;top:527.2px;width:9.60px;height:9.40px;background:#868686;box-shadow:inset 1px 1px 0 #c0c0c0, inset -1px -1px 0 #404040"></div><div style="left:40.1px;top:536.6px;width:413.90px;height:9.40px;background:#c8c8c8"></div><div style="left:40.1px;top:536.6px;width:4.90px;height:9.40px;background:#868686;box-shadow:inset -1px -1px 0 #404040"></div><div style="left:45px;top:536.6px;width:271.60px;height:9.40px;background:#868686;box-shadow:inset 1px 1px 0 #c0c0c0, inset -1px -1px 0 #404040"></div><div style="left:444.4px;top:536.6px;width:9.60px;height:9.40px;background:#868686;box-shadow:inset 1px 1px 0 #c0c0c0, inset -1px -1px 0 #404040"></div><div style="left:454px;top:536.6px;width:9.60px;height:9.40px;background:#868686"></div><div style="left:463.6px;top:76px;width:3.20px;height:472.70px;background:#7a7a7a"></div><div style="left:40px;top:546px;width:426.80px;height:2.70px;background:#7a7a7a"></div><div class="arr" style="left:456.3px;top:81.8px;border-width:0 2.5px 2.5px 2.5px;border-color:transparent transparent #000 transparent"></div><div class="arr" style="left:456.3px;top:531px;border-width:2.5px 2.5px 0 2.5px;border-color:#000 transparent transparent transparent"></div><div class="arr" style="left:448.2px;top:538.8px;border-width:2.5px 0 2.5px 2.5px;border-color:transparent transparent transparent #000"></div><div style="left:462.4px;top:72px;width:1.60px;height:484.00px;background:#6a6a6a"></div><div style="left:468.8px;top:68.8px;width:86.20px;height:27.20px;background:#888888"></div><div style="left:473.6px;top:79.6px;width:80.40px;height:1.40px;background:#484848"></div><div style="left:473.6px;top:81px;width:80.40px;height:1.80px;background:#989898"></div><div style="left:476.0px;top:72.5px;width:1.00px;height:2.50px;background:#2a2a2a"></div><div style="left:476.0px;top:88px;width:1.00px;height:2.50px;background:#2a2a2a"></div><div style="left:481.05px;top:72.5px;width:1.00px;height:2.50px;background:#2a2a2a"></div><div style="left:481.05px;top:88px;width:1.00px;height:2.50px;background:#2a2a2a"></div><div style="left:486.1px;top:72.5px;width:1.00px;height:2.50px;background:#2a2a2a"></div><div style="left:486.1px;top:88px;width:1.00px;height:2.50px;background:#2a2a2a"></div><div style="left:491.15px;top:72.5px;width:1.00px;height:2.50px;background:#2a2a2a"></div><div style="left:491.15px;top:88px;width:1.00px;height:2.50px;background:#2a2a2a"></div><div style="left:496.2px;top:72.5px;width:1.00px;height:2.50px;background:#2a2a2a"></div><div style="left:496.2px;top:88px;width:1.00px;height:2.50px;background:#2a2a2a"></div><div style="left:501.25px;top:72.5px;width:1.00px;height:2.50px;background:#2a2a2a"></div><div style="left:501.25px;top:88px;width:1.00px;height:2.50px;background:#2a2a2a"></div><div style="left:506.3px;top:72.5px;width:1.00px;height:2.50px;background:#2a2a2a"></div><div style="left:506.3px;top:88px;width:1.00px;height:2.50px;background:#2a2a2a"></div><div style="left:511.35px;top:72.5px;width:1.00px;height:2.50px;background:#2a2a2a"></div><div style="left:511.35px;top:88px;width:1.00px;height:2.50px;background:#2a2a2a"></div><div style="left:516.4px;top:72.5px;width:1.00px;height:2.50px;background:#2a2a2a"></div><div style="left:516.4px;top:88px;width:1.00px;height:2.50px;background:#2a2a2a"></div><div style="left:521.45px;top:72.5px;width:1.00px;height:2.50px;background:#2a2a2a"></div><div style="left:521.45px;top:88px;width:1.00px;height:2.50px;background:#2a2a2a"></div><div style="left:526.5px;top:72.5px;width:1.00px;height:2.50px;background:#2a2a2a"></div><div style="left:526.5px;top:88px;width:1.00px;height:2.50px;background:#2a2a2a"></div><div style="left:531.55px;top:72.5px;width:1.00px;height:2.50px;background:#2a2a2a"></div><div style="left:531.55px;top:88px;width:1.00px;height:2.50px;background:#2a2a2a"></div><div style="left:536.6px;top:72.5px;width:1.00px;height:2.50px;background:#2a2a2a"></div><div style="left:536.6px;top:88px;width:1.00px;height:2.50px;background:#2a2a2a"></div><div style="left:541.65px;top:72.5px;width:1.00px;height:2.50px;background:#2a2a2a"></div><div style="left:541.65px;top:88px;width:1.00px;height:2.50px;background:#2a2a2a"></div><div style="left:546.7px;top:72.5px;width:1.00px;height:2.50px;background:#2a2a2a"></div><div style="left:546.7px;top:88px;width:1.00px;height:2.50px;background:#2a2a2a"></div><div style="left:551.75px;top:72.5px;width:1.00px;height:2.50px;background:#2a2a2a"></div><div style="left:551.75px;top:88px;width:1.00px;height:2.50px;background:#2a2a2a"></div><div style="left:477.6px;top:75.2px;width:6.40px;height:11.60px;background:#888888;box-shadow:inset 1px 1px 0 #c8c8c8, inset -1px -1px 0 #404040"></div><div style="left:562.7px;top:68.5px;width:29.80px;height:31.50px;background:#838383;box-shadow:inset 1px 1px 0 #b4b4b4, inset -1px -1.5px 0 #303030;"></div><span class="t" style="left:568.8px;top:78.06px;font-size:7.6px;color:#101010;transform:scaleX(0.872);">SetPal</span><div style="left:598.4px;top:68px;width:24.40px;height:32.00px;background:#838383;box-shadow:inset 1px 1px 0 #b4b4b4, inset -1px -1.5px 0 #303030;"></div><div class="ct" style="left:598.4px;top:77px;width:24.4px">AltPal<br>ZX</div><div style="left:474px;top:106.4px;width:28.30px;height:11.60px;background:#888888;box-shadow:inset 1px 1px 0 #b0b0b0, inset -1px 0 0 #404040"></div><span class="t" style="left:477.6px;top:108.16px;font-size:7.6px;color:#101010;transform:scaleX(0.839);">Settings</span><div style="left:503px;top:103px;width:40.00px;height:15.00px;background:#888888"></div><span class="t" style="left:508px;top:107.06px;font-size:7.6px;color:#101010;transform:scaleX(0.816);">PixelPaint</span><div style="left:473.6px;top:119.5px;width:147.90px;height:79.50px;background:#808080"></div><span class="t" style="left:484px;top:132.16px;font-size:7.6px;color:#101010;transform:scaleX(0.872);">Check Mode</span><div style="left:542.9px;top:129.8px;width:66.70px;height:12.10px;background:#909090"></div><div style="left:543.9px;top:131.3px;width:55.00px;height:9.60px;background:#ffffff"></div><div style="left:599.2px;top:131.3px;width:8.60px;height:9.60px;background:#868686;box-shadow:inset 1px 1px 0 #c0c0c0, inset -1px -1px 0 #404040"></div><div class="arr" style="left:601px;top:135px;border-width:2.5px 2.5px 0 2.5px;border-color:#000 transparent transparent transparent"></div><span class="t" style="left:545px;top:132.96px;font-size:7.6px;color:#101010;transform:scaleX(0.872);">Off</span><div style="left:471px;top:207.1px;width:149.80px;height:162.60px;overflow:hidden;background:#200020"><svg width="150" height="163" style="position:absolute;left:0;top:0"><defs><g id="pr0"><rect x="0.00" width="3.38" height="6.21" fill="#000050"/><rect x="2.38" width="3.38" height="6.21" fill="#000000"/><rect x="4.76" width="3.38" height="6.21" fill="#400048"/><rect x="7.14" width="3.38" height="6.21" fill="#400000"/><rect x="9.52" width="3.38" height="6.21" fill="#000050"/><rect x="11.90" width="3.38" height="6.21" fill="#000000"/><rect x="14.28" width="3.38" height="6.21" fill="#403850"/><rect x="16.66" width="3.38" height="6.21" fill="#403800"/><rect x="19.04" width="3.38" height="6.21" fill="#003850"/><rect x="21.42" width="3.38" height="6.21" fill="#003800"/><rect x="23.80" width="3.38" height="6.21" fill="#403850"/><rect x="26.18" width="3.38" height="6.21" fill="#403800"/><rect x="28.56" width="3.38" height="6.21" fill="#000050"/><rect x="30.94" width="3.38" height="6.21" fill="#000000"/><rect x="33.32" width="3.38" height="6.21" fill="#400048"/><rect x="35.70" width="3.38" height="6.21" fill="#400000"/><rect x="38.08" width="3.38" height="6.21" fill="#000050"/><rect x="40.46" width="3.38" height="6.21" fill="#000000"/><rect x="42.84" width="3.38" height="6.21" fill="#403850"/><rect x="45.22" width="3.38" height="6.21" fill="#403800"/><rect x="47.60" width="3.38" height="6.21" fill="#003850"/><rect x="49.98" width="3.38" height="6.21" fill="#003800"/><rect x="52.36" width="3.38" height="6.21" fill="#403850"/><rect x="54.74" width="3.38" height="6.21" fill="#403800"/><rect x="57.12" width="3.38" height="6.21" fill="#000050"/><rect x="59.50" width="3.38" height="6.21" fill="#000000"/><rect x="61.88" width="3.38" height="6.21" fill="#400048"/><rect x="64.26" width="3.38" height="6.21" fill="#400000"/><rect x="66.64" width="3.38" height="6.21" fill="#000050"/><rect x="69.02" width="3.38" height="6.21" fill="#000000"/><rect x="71.40" width="3.38" height="6.21" fill="#403850"/><rect x="73.78" width="3.38" height="6.21" fill="#403800"/><rect x="76.16" width="3.38" height="6.21" fill="#003850"/><rect x="78.54" width="3.38" height="6.21" fill="#003800"/><rect x="80.92" width="3.38" height="6.21" fill="#403850"/><rect x="83.30" width="3.38" height="6.21" fill="#403800"/><rect x="85.68" width="3.38" height="6.21" fill="#000050"/><rect x="88.06" width="3.38" height="6.21" fill="#000000"/><rect x="90.44" width="3.38" height="6.21" fill="#400048"/><rect x="92.82" width="3.38" height="6.21" fill="#400000"/><rect x="95.20" width="3.38" height="6.21" fill="#000050"/><rect x="97.58" width="3.38" height="6.21" fill="#000000"/><rect x="99.96" width="3.38" height="6.21" fill="#403850"/><rect x="102.34" width="3.38" height="6.21" fill="#403800"/><rect x="104.72" width="3.38" height="6.21" fill="#003850"/><rect x="107.10" width="3.38" height="6.21" fill="#003800"/><rect x="109.48" width="3.38" height="6.21" fill="#403850"/><rect x="111.86" width="3.38" height="6.21" fill="#403800"/><rect x="114.24" width="3.38" height="6.21" fill="#000050"/><rect x="116.62" width="3.38" height="6.21" fill="#000000"/><rect x="119.00" width="3.38" height="6.21" fill="#400048"/><rect x="121.38" width="3.38" height="6.21" fill="#400000"/><rect x="123.76" width="3.38" height="6.21" fill="#000050"/><rect x="126.14" width="3.38" height="6.21" fill="#000000"/><rect x="128.52" width="3.38" height="6.21" fill="#403850"/><rect x="130.90" width="3.38" height="6.21" fill="#403800"/><rect x="133.28" width="3.38" height="6.21" fill="#003850"/><rect x="135.66" width="3.38" height="6.21" fill="#003800"/><rect x="138.04" width="3.38" height="6.21" fill="#403850"/><rect x="140.42" width="3.38" height="6.21" fill="#403800"/><rect x="142.80" width="3.38" height="6.21" fill="#000050"/><rect x="145.18" width="3.38" height="6.21" fill="#000000"/><rect x="147.56" width="3.38" height="6.21" fill="#400048"/><rect x="149.94" width="3.38" height="6.21" fill="#400000"/></g><g id="pr1"><rect x="0.00" width="3.38" height="6.21" fill="#400048"/><rect x="2.38" width="3.38" height="6.21" fill="#400000"/><rect x="4.76" width="3.38" height="6.21" fill="#000050"/><rect x="7.14" width="3.38" height="6.21" fill="#000000"/><rect x="9.52" width="3.38" height="6.21" fill="#400048"/><rect x="11.90" width="3.38" height="6.21" fill="#400000"/><rect x="14.28" width="3.38" height="6.21" fill="#003850"/><rect x="16.66" width="3.38" height="6.21" fill="#003800"/><rect x="19.04" width="3.38" height="6.21" fill="#403850"/><rect x="21.42" width="3.38" height="6.21" fill="#403800"/><rect x="23.80" width="3.38" height="6.21" fill="#003850"/><rect x="26.18" width="3.38" height="6.21" fill="#003800"/><rect x="28.56" width="3.38" height="6.21" fill="#400048"/><rect x="30.94" width="3.38" height="6.21" fill="#400000"/><rect x="33.32" width="3.38" height="6.21" fill="#000050"/><rect x="35.70" width="3.38" height="6.21" fill="#000000"/><rect x="38.08" width="3.38" height="6.21" fill="#400048"/><rect x="40.46" width="3.38" height="6.21" fill="#400000"/><rect x="42.84" width="3.38" height="6.21" fill="#003850"/><rect x="45.22" width="3.38" height="6.21" fill="#003800"/><rect x="47.60" width="3.38" height="6.21" fill="#403850"/><rect x="49.98" width="3.38" height="6.21" fill="#403800"/><rect x="52.36" width="3.38" height="6.21" fill="#003850"/><rect x="54.74" width="3.38" height="6.21" fill="#003800"/><rect x="57.12" width="3.38" height="6.21" fill="#400048"/><rect x="59.50" width="3.38" height="6.21" fill="#400000"/><rect x="61.88" width="3.38" height="6.21" fill="#000050"/><rect x="64.26" width="3.38" height="6.21" fill="#000000"/><rect x="66.64" width="3.38" height="6.21" fill="#400048"/><rect x="69.02" width="3.38" height="6.21" fill="#400000"/><rect x="71.40" width="3.38" height="6.21" fill="#003850"/><rect x="73.78" width="3.38" height="6.21" fill="#003800"/><rect x="76.16" width="3.38" height="6.21" fill="#403850"/><rect x="78.54" width="3.38" height="6.21" fill="#403800"/><rect x="80.92" width="3.38" height="6.21" fill="#003850"/><rect x="83.30" width="3.38" height="6.21" fill="#003800"/><rect x="85.68" width="3.38" height="6.21" fill="#400048"/><rect x="88.06" width="3.38" height="6.21" fill="#400000"/><rect x="90.44" width="3.38" height="6.21" fill="#000050"/><rect x="92.82" width="3.38" height="6.21" fill="#000000"/><rect x="95.20" width="3.38" height="6.21" fill="#400048"/><rect x="97.58" width="3.38" height="6.21" fill="#400000"/><rect x="99.96" width="3.38" height="6.21" fill="#003850"/><rect x="102.34" width="3.38" height="6.21" fill="#003800"/><rect x="104.72" width="3.38" height="6.21" fill="#403850"/><rect x="107.10" width="3.38" height="6.21" fill="#403800"/><rect x="109.48" width="3.38" height="6.21" fill="#003850"/><rect x="111.86" width="3.38" height="6.21" fill="#003800"/><rect x="114.24" width="3.38" height="6.21" fill="#400048"/><rect x="116.62" width="3.38" height="6.21" fill="#400000"/><rect x="119.00" width="3.38" height="6.21" fill="#000050"/><rect x="121.38" width="3.38" height="6.21" fill="#000000"/><rect x="123.76" width="3.38" height="6.21" fill="#400048"/><rect x="126.14" width="3.38" height="6.21" fill="#400000"/><rect x="128.52" width="3.38" height="6.21" fill="#003850"/><rect x="130.90" width="3.38" height="6.21" fill="#003800"/><rect x="133.28" width="3.38" height="6.21" fill="#403850"/><rect x="135.66" width="3.38" height="6.21" fill="#403800"/><rect x="138.04" width="3.38" height="6.21" fill="#003850"/><rect x="140.42" width="3.38" height="6.21" fill="#003800"/><rect x="142.80" width="3.38" height="6.21" fill="#400048"/><rect x="145.18" width="3.38" height="6.21" fill="#400000"/><rect x="147.56" width="3.38" height="6.21" fill="#000050"/><rect x="149.94" width="3.38" height="6.21" fill="#000000"/></g><g id="pr2"><rect x="0.00" width="3.38" height="6.21" fill="#000050"/><rect x="2.38" width="3.38" height="6.21" fill="#000000"/><rect x="4.76" width="3.38" height="6.21" fill="#400048"/><rect x="7.14" width="3.38" height="6.21" fill="#400000"/><rect x="9.52" width="3.38" height="6.21" fill="#000050"/><rect x="11.90" width="3.38" height="6.21" fill="#000000"/><rect x="14.28" width="3.38" height="6.21" fill="#403850"/><rect x="16.66" width="3.38" height="6.21" fill="#403800"/><rect x="19.04" width="3.38" height="6.21" fill="#003850"/><rect x="21.42" width="3.38" height="6.21" fill="#003800"/><rect x="23.80" width="3.38" height="6.21" fill="#403850"/><rect x="26.18" width="3.38" height="6.21" fill="#403800"/><rect x="28.56" width="3.38" height="6.21" fill="#000050"/><rect x="30.94" width="3.38" height="6.21" fill="#000000"/><rect x="33.32" width="3.38" height="6.21" fill="#400048"/><rect x="35.70" width="3.38" height="6.21" fill="#400000"/><rect x="38.08" width="3.38" height="6.21" fill="#000050"/><rect x="40.46" width="3.38" height="6.21" fill="#000000"/><rect x="42.84" width="3.38" height="6.21" fill="#403850"/><rect x="45.22" width="3.38" height="6.21" fill="#403800"/><rect x="47.60" width="3.38" height="6.21" fill="#003850"/><rect x="49.98" width="3.38" height="6.21" fill="#003800"/><rect x="52.36" width="3.38" height="6.21" fill="#403850"/><rect x="54.74" width="3.38" height="6.21" fill="#403800"/><rect x="57.12" width="3.38" height="6.21" fill="#000050"/><rect x="59.50" width="3.38" height="6.21" fill="#000000"/><rect x="61.88" width="3.38" height="6.21" fill="#400048"/><rect x="64.26" width="3.38" height="6.21" fill="#400000"/><rect x="66.64" width="3.38" height="6.21" fill="#000050"/><rect x="69.02" width="3.38" height="6.21" fill="#000000"/><rect x="71.40" width="3.38" height="6.21" fill="#403850"/><rect x="73.78" width="3.38" height="6.21" fill="#403800"/><rect x="76.16" width="3.38" height="6.21" fill="#003850"/><rect x="78.54" width="3.38" height="6.21" fill="#003800"/><rect x="80.92" width="3.38" height="6.21" fill="#403850"/><rect x="83.30" width="3.38" height="6.21" fill="#403800"/><rect x="85.68" width="3.38" height="6.21" fill="#000050"/><rect x="88.06" width="3.38" height="6.21" fill="#000000"/><rect x="90.44" width="3.38" height="6.21" fill="#400048"/><rect x="92.82" width="3.38" height="6.21" fill="#400000"/><rect x="95.20" width="3.38" height="6.21" fill="#000050"/><rect x="97.58" width="3.38" height="6.21" fill="#000000"/><rect x="99.96" width="3.38" height="6.21" fill="#403850"/><rect x="102.34" width="3.38" height="6.21" fill="#403800"/><rect x="104.72" width="3.38" height="6.21" fill="#003850"/><rect x="107.10" width="3.38" height="6.21" fill="#003800"/><rect x="109.48" width="3.38" height="6.21" fill="#403850"/><rect x="111.86" width="3.38" height="6.21" fill="#403800"/><rect x="114.24" width="3.38" height="6.21" fill="#000050"/><rect x="116.62" width="3.38" height="6.21" fill="#000000"/><rect x="119.00" width="3.38" height="6.21" fill="#400048"/><rect x="121.38" width="3.38" height="6.21" fill="#400000"/><rect x="123.76" width="3.38" height="6.21" fill="#000050"/><rect x="126.14" width="3.38" height="6.21" fill="#000000"/><rect x="128.52" width="3.38" height="6.21" fill="#403850"/><rect x="130.90" width="3.38" height="6.21" fill="#403800"/><rect x="133.28" width="3.38" height="6.21" fill="#003850"/><rect x="135.66" width="3.38" height="6.21" fill="#003800"/><rect x="138.04" width="3.38" height="6.21" fill="#403850"/><rect x="140.42" width="3.38" height="6.21" fill="#403800"/><rect x="142.80" width="3.38" height="6.21" fill="#000050"/><rect x="145.18" width="3.38" height="6.21" fill="#000000"/><rect x="147.56" width="3.38" height="6.21" fill="#400048"/><rect x="149.94" width="3.38" height="6.21" fill="#400000"/></g><g id="pr3"><rect x="0.00" width="3.38" height="6.21" fill="#403850"/><rect x="2.38" width="3.38" height="6.21" fill="#403800"/><rect x="4.76" width="3.38" height="6.21" fill="#003850"/><rect x="7.14" width="3.38" height="6.21" fill="#003800"/><rect x="9.52" width="3.38" height="6.21" fill="#403850"/><rect x="11.90" width="3.38" height="6.21" fill="#403800"/><rect x="14.28" width="3.38" height="6.21" fill="#000050"/><rect x="16.66" width="3.38" height="6.21" fill="#000000"/><rect x="19.04" width="3.38" height="6.21" fill="#400048"/><rect x="21.42" width="3.38" height="6.21" fill="#400000"/><rect x="23.80" width="3.38" height="6.21" fill="#000050"/><rect x="26.18" width="3.38" height="6.21" fill="#000000"/><rect x="28.56" width="3.38" height="6.21" fill="#403850"/><rect x="30.94" width="3.38" height="6.21" fill="#403800"/><rect x="33.32" width="3.38" height="6.21" fill="#003850"/><rect x="35.70" width="3.38" height="6.21" fill="#003800"/><rect x="38.08" width="3.38" height="6.21" fill="#403850"/><rect x="40.46" width="3.38" height="6.21" fill="#403800"/><rect x="42.84" width="3.38" height="6.21" fill="#000050"/><rect x="45.22" width="3.38" height="6.21" fill="#000000"/><rect x="47.60" width="3.38" height="6.21" fill="#400048"/><rect x="49.98" width="3.38" height="6.21" fill="#400000"/><rect x="52.36" width="3.38" height="6.21" fill="#000050"/><rect x="54.74" width="3.38" height="6.21" fill="#000000"/><rect x="57.12" width="3.38" height="6.21" fill="#403850"/><rect x="59.50" width="3.38" height="6.21" fill="#403800"/><rect x="61.88" width="3.38" height="6.21" fill="#003850"/><rect x="64.26" width="3.38" height="6.21" fill="#003800"/><rect x="66.64" width="3.38" height="6.21" fill="#403850"/><rect x="69.02" width="3.38" height="6.21" fill="#403800"/><rect x="71.40" width="3.38" height="6.21" fill="#000050"/><rect x="73.78" width="3.38" height="6.21" fill="#000000"/><rect x="76.16" width="3.38" height="6.21" fill="#400048"/><rect x="78.54" width="3.38" height="6.21" fill="#400000"/><rect x="80.92" width="3.38" height="6.21" fill="#000050"/><rect x="83.30" width="3.38" height="6.21" fill="#000000"/><rect x="85.68" width="3.38" height="6.21" fill="#403850"/><rect x="88.06" width="3.38" height="6.21" fill="#403800"/><rect x="90.44" width="3.38" height="6.21" fill="#003850"/><rect x="92.82" width="3.38" height="6.21" fill="#003800"/><rect x="95.20" width="3.38" height="6.21" fill="#403850"/><rect x="97.58" width="3.38" height="6.21" fill="#403800"/><rect x="99.96" width="3.38" height="6.21" fill="#000050"/><rect x="102.34" width="3.38" height="6.21" fill="#000000"/><rect x="104.72" width="3.38" height="6.21" fill="#400048"/><rect x="107.10" width="3.38" height="6.21" fill="#400000"/><rect x="109.48" width="3.38" height="6.21" fill="#000050"/><rect x="111.86" width="3.38" height="6.21" fill="#000000"/><rect x="114.24" width="3.38" height="6.21" fill="#403850"/><rect x="116.62" width="3.38" height="6.21" fill="#403800"/><rect x="119.00" width="3.38" height="6.21" fill="#003850"/><rect x="121.38" width="3.38" height="6.21" fill="#003800"/><rect x="123.76" width="3.38" height="6.21" fill="#403850"/><rect x="126.14" width="3.38" height="6.21" fill="#403800"/><rect x="128.52" width="3.38" height="6.21" fill="#000050"/><rect x="130.90" width="3.38" height="6.21" fill="#000000"/><rect x="133.28" width="3.38" height="6.21" fill="#400048"/><rect x="135.66" width="3.38" height="6.21" fill="#400000"/><rect x="138.04" width="3.38" height="6.21" fill="#000050"/><rect x="140.42" width="3.38" height="6.21" fill="#000000"/><rect x="142.80" width="3.38" height="6.21" fill="#403850"/><rect x="145.18" width="3.38" height="6.21" fill="#403800"/><rect x="147.56" width="3.38" height="6.21" fill="#003850"/><rect x="149.94" width="3.38" height="6.21" fill="#003800"/></g><g id="pr4"><rect x="0.00" width="3.38" height="6.21" fill="#003850"/><rect x="2.38" width="3.38" height="6.21" fill="#003800"/><rect x="4.76" width="3.38" height="6.21" fill="#403850"/><rect x="7.14" width="3.38" height="6.21" fill="#403800"/><rect x="9.52" width="3.38" height="6.21" fill="#003850"/><rect x="11.90" width="3.38" height="6.21" fill="#003800"/><rect x="14.28" width="3.38" height="6.21" fill="#400048"/><rect x="16.66" width="3.38" height="6.21" fill="#400000"/><rect x="19.04" width="3.38" height="6.21" fill="#000050"/><rect x="21.42" width="3.38" height="6.21" fill="#000000"/><rect x="23.80" width="3.38" height="6.21" fill="#400048"/><rect x="26.18" width="3.38" height="6.21" fill="#400000"/><rect x="28.56" width="3.38" height="6.21" fill="#003850"/><rect x="30.94" width="3.38" height="6.21" fill="#003800"/><rect x="33.32" width="3.38" height="6.21" fill="#403850"/><rect x="35.70" width="3.38" height="6.21" fill="#403800"/><rect x="38.08" width="3.38" height="6.21" fill="#003850"/><rect x="40.46" width="3.38" height="6.21" fill="#003800"/><rect x="42.84" width="3.38" height="6.21" fill="#400048"/><rect x="45.22" width="3.38" height="6.21" fill="#400000"/><rect x="47.60" width="3.38" height="6.21" fill="#000050"/><rect x="49.98" width="3.38" height="6.21" fill="#000000"/><rect x="52.36" width="3.38" height="6.21" fill="#400048"/><rect x="54.74" width="3.38" height="6.21" fill="#400000"/><rect x="57.12" width="3.38" height="6.21" fill="#003850"/><rect x="59.50" width="3.38" height="6.21" fill="#003800"/><rect x="61.88" width="3.38" height="6.21" fill="#403850"/><rect x="64.26" width="3.38" height="6.21" fill="#403800"/><rect x="66.64" width="3.38" height="6.21" fill="#003850"/><rect x="69.02" width="3.38" height="6.21" fill="#003800"/><rect x="71.40" width="3.38" height="6.21" fill="#400048"/><rect x="73.78" width="3.38" height="6.21" fill="#400000"/><rect x="76.16" width="3.38" height="6.21" fill="#000050"/><rect x="78.54" width="3.38" height="6.21" fill="#000000"/><rect x="80.92" width="3.38" height="6.21" fill="#400048"/><rect x="83.30" width="3.38" height="6.21" fill="#400000"/><rect x="85.68" width="3.38" height="6.21" fill="#003850"/><rect x="88.06" width="3.38" height="6.21" fill="#003800"/><rect x="90.44" width="3.38" height="6.21" fill="#403850"/><rect x="92.82" width="3.38" height="6.21" fill="#403800"/><rect x="95.20" width="3.38" height="6.21" fill="#003850"/><rect x="97.58" width="3.38" height="6.21" fill="#003800"/><rect x="99.96" width="3.38" height="6.21" fill="#400048"/><rect x="102.34" width="3.38" height="6.21" fill="#400000"/><rect x="104.72" width="3.38" height="6.21" fill="#000050"/><rect x="107.10" width="3.38" height="6.21" fill="#000000"/><rect x="109.48" width="3.38" height="6.21" fill="#400048"/><rect x="111.86" width="3.38" height="6.21" fill="#400000"/><rect x="114.24" width="3.38" height="6.21" fill="#003850"/><rect x="116.62" width="3.38" height="6.21" fill="#003800"/><rect x="119.00" width="3.38" height="6.21" fill="#403850"/><rect x="121.38" width="3.38" height="6.21" fill="#403800"/><rect x="123.76" width="3.38" height="6.21" fill="#003850"/><rect x="126.14" width="3.38" height="6.21" fill="#003800"/><rect x="128.52" width="3.38" height="6.21" fill="#400048"/><rect x="130.90" width="3.38" height="6.21" fill="#400000"/><rect x="133.28" width="3.38" height="6.21" fill="#000050"/><rect x="135.66" width="3.38" height="6.21" fill="#000000"/><rect x="138.04" width="3.38" height="6.21" fill="#400048"/><rect x="140.42" width="3.38" height="6.21" fill="#400000"/><rect x="142.80" width="3.38" height="6.21" fill="#003850"/><rect x="145.18" width="3.38" height="6.21" fill="#003800"/><rect x="147.56" width="3.38" height="6.21" fill="#403850"/><rect x="149.94" width="3.38" height="6.21" fill="#403800"/></g><g id="pr5"><rect x="0.00" width="3.38" height="6.21" fill="#403850"/><rect x="2.38" width="3.38" height="6.21" fill="#403800"/><rect x="4.76" width="3.38" height="6.21" fill="#003850"/><rect x="7.14" width="3.38" height="6.21" fill="#003800"/><rect x="9.52" width="3.38" height="6.21" fill="#403850"/><rect x="11.90" width="3.38" height="6.21" fill="#403800"/><rect x="14.28" width="3.38" height="6.21" fill="#000050"/><rect x="16.66" width="3.38" height="6.21" fill="#000000"/><rect x="19.04" width="3.38" height="6.21" fill="#400048"/><rect x="21.42" width="3.38" height="6.21" fill="#400000"/><rect x="23.80" width="3.38" height="6.21" fill="#000050"/><rect x="26.18" width="3.38" height="6.21" fill="#000000"/><rect x="28.56" width="3.38" height="6.21" fill="#403850"/><rect x="30.94" width="3.38" height="6.21" fill="#403800"/><rect x="33.32" width="3.38" height="6.21" fill="#003850"/><rect x="35.70" width="3.38" height="6.21" fill="#003800"/><rect x="38.08" width="3.38" height="6.21" fill="#403850"/><rect x="40.46" width="3.38" height="6.21" fill="#403800"/><rect x="42.84" width="3.38" height="6.21" fill="#000050"/><rect x="45.22" width="3.38" height="6.21" fill="#000000"/><rect x="47.60" width="3.38" height="6.21" fill="#400048"/><rect x="49.98" width="3.38" height="6.21" fill="#400000"/><rect x="52.36" width="3.38" height="6.21" fill="#000050"/><rect x="54.74" width="3.38" height="6.21" fill="#000000"/><rect x="57.12" width="3.38" height="6.21" fill="#403850"/><rect x="59.50" width="3.38" height="6.21" fill="#403800"/><rect x="61.88" width="3.38" height="6.21" fill="#003850"/><rect x="64.26" width="3.38" height="6.21" fill="#003800"/><rect x="66.64" width="3.38" height="6.21" fill="#403850"/><rect x="69.02" width="3.38" height="6.21" fill="#403800"/><rect x="71.40" width="3.38" height="6.21" fill="#000050"/><rect x="73.78" width="3.38" height="6.21" fill="#000000"/><rect x="76.16" width="3.38" height="6.21" fill="#400048"/><rect x="78.54" width="3.38" height="6.21" fill="#400000"/><rect x="80.92" width="3.38" height="6.21" fill="#000050"/><rect x="83.30" width="3.38" height="6.21" fill="#000000"/><rect x="85.68" width="3.38" height="6.21" fill="#403850"/><rect x="88.06" width="3.38" height="6.21" fill="#403800"/><rect x="90.44" width="3.38" height="6.21" fill="#003850"/><rect x="92.82" width="3.38" height="6.21" fill="#003800"/><rect x="95.20" width="3.38" height="6.21" fill="#403850"/><rect x="97.58" width="3.38" height="6.21" fill="#403800"/><rect x="99.96" width="3.38" height="6.21" fill="#000050"/><rect x="102.34" width="3.38" height="6.21" fill="#000000"/><rect x="104.72" width="3.38" height="6.21" fill="#400048"/><rect x="107.10" width="3.38" height="6.21" fill="#400000"/><rect x="109.48" width="3.38" height="6.21" fill="#000050"/><rect x="111.86" width="3.38" height="6.21" fill="#000000"/><rect x="114.24" width="3.38" height="6.21" fill="#403850"/><rect x="116.62" width="3.38" height="6.21" fill="#403800"/><rect x="119.00" width="3.38" height="6.21" fill="#003850"/><rect x="121.38" width="3.38" height="6.21" fill="#003800"/><rect x="123.76" width="3.38" height="6.21" fill="#403850"/><rect x="126.14" width="3.38" height="6.21" fill="#403800"/><rect x="128.52" width="3.38" height="6.21" fill="#000050"/><rect x="130.90" width="3.38" height="6.21" fill="#000000"/><rect x="133.28" width="3.38" height="6.21" fill="#400048"/><rect x="135.66" width="3.38" height="6.21" fill="#400000"/><rect x="138.04" width="3.38" height="6.21" fill="#000050"/><rect x="140.42" width="3.38" height="6.21" fill="#000000"/><rect x="142.80" width="3.38" height="6.21" fill="#403850"/><rect x="145.18" width="3.38" height="6.21" fill="#403800"/><rect x="147.56" width="3.38" height="6.21" fill="#003850"/><rect x="149.94" width="3.38" height="6.21" fill="#003800"/></g></defs><use href="#pr0" y="0.00"/><use href="#pr1" y="5.21"/><use href="#pr2" y="10.42"/><use href="#pr3" y="15.63"/><use href="#pr4" y="20.84"/><use href="#pr5" y="26.05"/><use href="#pr0" y="31.26"/><use href="#pr1" y="36.47"/><use href="#pr2" y="41.68"/><use href="#pr3" y="46.89"/><use href="#pr4" y="52.10"/><use href="#pr5" y="57.31"/><use href="#pr0" y="62.52"/><use href="#pr1" y="67.73"/><use href="#pr2" y="72.94"/><use href="#pr3" y="78.15"/><use href="#pr4" y="83.36"/><use href="#pr5" y="88.57"/><use href="#pr0" y="93.78"/><use href="#pr1" y="98.99"/><use href="#pr2" y="104.20"/><use href="#pr3" y="109.41"/><use href="#pr4" y="114.62"/><use href="#pr5" y="119.83"/><use href="#pr0" y="125.04"/><use href="#pr1" y="130.25"/><use href="#pr2" y="135.46"/><use href="#pr3" y="140.67"/><use href="#pr4" y="145.88"/><use href="#pr5" y="151.09"/><use href="#pr0" y="156.30"/><use href="#pr1" y="161.51"/></svg></div><div style="left:473px;top:390.8px;width:149.70px;height:156.20px;background:#808080;box-shadow:inset 1px 1px 0 #b0b0b0, inset -1.2px -1.2px 0 #404040"></div><div style="left:474.4px;top:379.6px;width:20.40px;height:11.40px;background:#888888"></div><span class="t" style="left:477.9px;top:380.96px;font-size:7.6px;color:#101010;transform:scaleX(0.872);">Info</span><div style="left:501.9px;top:378.8px;width:21.70px;height:12.20px;background:#888888"></div><span class="t" style="left:503px;top:381.76px;font-size:7.6px;color:#101010;transform:scaleX(0.872);">Palette</span><div style="left:527px;top:379.9px;width:24.90px;height:11.10px;background:#888888;box-shadow:inset 1px 1px 0 #b0b0b0, inset -1px 0 0 #404040"></div><span class="t" style="left:530.3px;top:381.76px;font-size:7.6px;color:#101010;transform:scaleX(0.872);">About</span><div style="left:478.8px;top:396.2px;width:29.10px;height:29.40px;background:#838383;box-shadow:inset 1px 1px 0 #b4b4b4, inset -1px -1.5px 0 #303030;"></div><div class="ct" style="left:478.8px;top:402.8px;width:29.10px">Last<br>Sprite</div><div style="left:509.4px;top:396.2px;width:28.80px;height:29.40px;background:#838383;box-shadow:inset 1px 1px 0 #b4b4b4, inset -1px -1.5px 0 #303030;"></div><div class="ct" style="left:509.4px;top:402.8px;width:28.80px">Next<br>Sprite</div><div style="left:555.2px;top:396.2px;width:28.50px;height:29.40px;background:#838383;box-shadow:inset 1px 1px 0 #b4b4b4, inset -1px -1.5px 0 #303030;"></div><div class="ct" style="left:555.2px;top:402.8px;width:28.50px">Last<br>Bank</div><div style="left:587.1px;top:396.2px;width:28.50px;height:29.40px;background:#838383;box-shadow:inset 1px 1px 0 #b4b4b4, inset -1px -1.5px 0 #303030;"></div><div class="ct" style="left:587.1px;top:402.8px;width:28.50px">Next<br>Bank</div><span class="t" style="left:482.8px;top:441.00px;font-size:6.8px;color:#101010;transform:scaleX(0.895);">(256,256) - (0,0)</span><span class="t" style="left:533px;top:441.00px;font-size:6.8px;color:#101010;transform:scaleX(0.910);">Vpos:0</span><span class="t" style="left:482.8px;top:448.16px;font-size:7.6px;color:#101010;transform:scaleX(0.805);">Sprites:0</span><div style="left:477.4px;top:458.2px;width:6.90px;height:7.70px;background:#fff;box-shadow:inset 1px 1px 0 #606060"></div><svg style="position:absolute;left:477.4px;top:458.2px" width="7" height="8"><path d="M1.3 3.8 L2.9 5.6 L5.8 1.8" stroke="#000" stroke-width="1.3" fill="none"/></svg><span class="t" style="left:489.8px;top:459.96px;font-size:7.6px;color:#101010;transform:scaleX(0.811);">Size to 8x8 grid</span><div style="left:545.3px;top:458.4px;width:7.70px;height:7.60px;background:#fff;box-shadow:inset 1px 1px 0 #606060"></div><span class="t" style="left:557.3px;top:459.96px;font-size:7.6px;color:#101010;transform:scaleX(0.811);">Fixed Size Sprite</span>
<svg width="626" height="556" style="position:absolute;left:0;top:0"><rect x="0.70" y="28.50" width="328.30" height="30.50" rx="1.2" fill="none" stroke="#00ffff" stroke-width="4"/><rect x="382.40" y="30.20" width="220.70" height="29.70" rx="1.2" fill="none" stroke="#ff0000" stroke-width="3.8"/><rect x="2.95" y="71.55" width="32.30" height="164.20" rx="1.2" fill="none" stroke="#ff00ff" stroke-width="3.5"/><rect x="2.80" y="57.10" width="27.40" height="16.20" rx="1.2" fill="none" stroke="#ffff00" stroke-width="3.6"/><rect x="2.70" y="319.20" width="32.40" height="109.00" rx="1.2" fill="none" stroke="#ff8040" stroke-width="3.6"/><rect x="0.90" y="511.50" width="33.50" height="40.50" rx="1.2" fill="none" stroke="#ffffff" stroke-width="3.8"/><rect x="38.40" y="78.10" width="430.90" height="472.30" rx="1.2" fill="none" stroke="#ffff00" stroke-width="3.8"/><rect x="466.60" y="67.10" width="89.80" height="30.20" rx="1.2" fill="none" stroke="#ffff00" stroke-width="3.6"/><rect x="559.10" y="64.50" width="35.80" height="40.40" rx="1.2" fill="none" stroke="#00ffff" stroke-width="3.6"/><rect x="597.30" y="65.90" width="27.40" height="35.80" rx="1.2" fill="none" stroke="#ff0000" stroke-width="3.6"/><rect x="504.70" y="104.40" width="36.60" height="12.90" rx="1.2" fill="none" stroke="#8000ff" stroke-width="3.4"/><rect x="471.45" y="117.35" width="151.70" height="83.20" rx="1.2" fill="none" stroke="#8000ff" stroke-width="3.7"/><rect x="466.90" y="204.90" width="156.00" height="167.00" rx="1.2" fill="none" stroke="#ffff00" stroke-width="4.2"/><rect x="472.90" y="377.70" width="23.70" height="12.10" rx="1.2" fill="none" stroke="#00ff00" stroke-width="3.4"/><rect x="500.00" y="377.00" width="25.10" height="12.90" rx="1.2" fill="none" stroke="#00ffff" stroke-width="3.4"/><rect x="473.00" y="393.40" width="144.60" height="38.90" rx="1.2" fill="none" stroke="#00ff00" stroke-width="3.8"/></svg>
</body></html>
